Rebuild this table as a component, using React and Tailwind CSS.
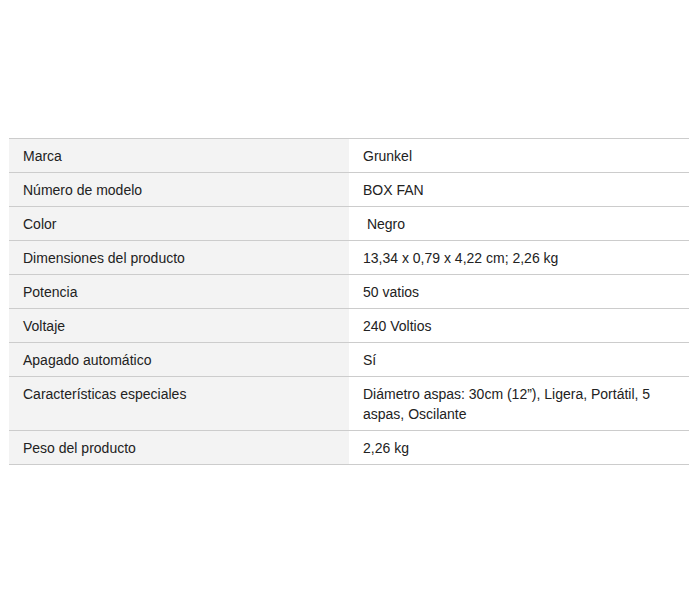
const rows = [
  ['Marca', 'Grunkel'],
  ['Número de modelo', 'BOX FAN'],
  ['Color', '\u00a0Negro'],
  ['Dimensiones del producto', '13,34 x 0,79 x 4,22 cm; 2,26 kg'],
  ['Potencia', '50 vatios'],
  ['Voltaje', '240 Voltios'],
  ['Apagado automático', 'Sí'],
  ['Características especiales', 'Diámetro aspas: 30cm (12”), Ligera, Portátil, 5 aspas, Oscilante'],
  ['Peso del producto', '2,26 kg'],
];

export default function App() {
  return (
    <div className="w-[700px] h-[614px] bg-white pt-[138px] pl-[9px]" style={{ fontFamily: '"Liberation Sans", Arial, sans-serif' }}>
      <table className="w-[680px] border-collapse table-fixed text-[14px] leading-[20px] text-[#222]">
        <tbody>
          {rows.map(([k, v]) => (
            <tr key={k} className="border-y border-[#cccccc]">
              <td className="w-[340px] bg-[#f3f3f3] pl-[14px] pr-[14px] pt-[7px] pb-[6px] align-top">{k}</td>
              <td className="pl-[14px] pr-[14px] pt-[7px] pb-[6px] align-top">{v}</td>
            </tr>
          ))}
        </tbody>
      </table>
    </div>
  );
}
